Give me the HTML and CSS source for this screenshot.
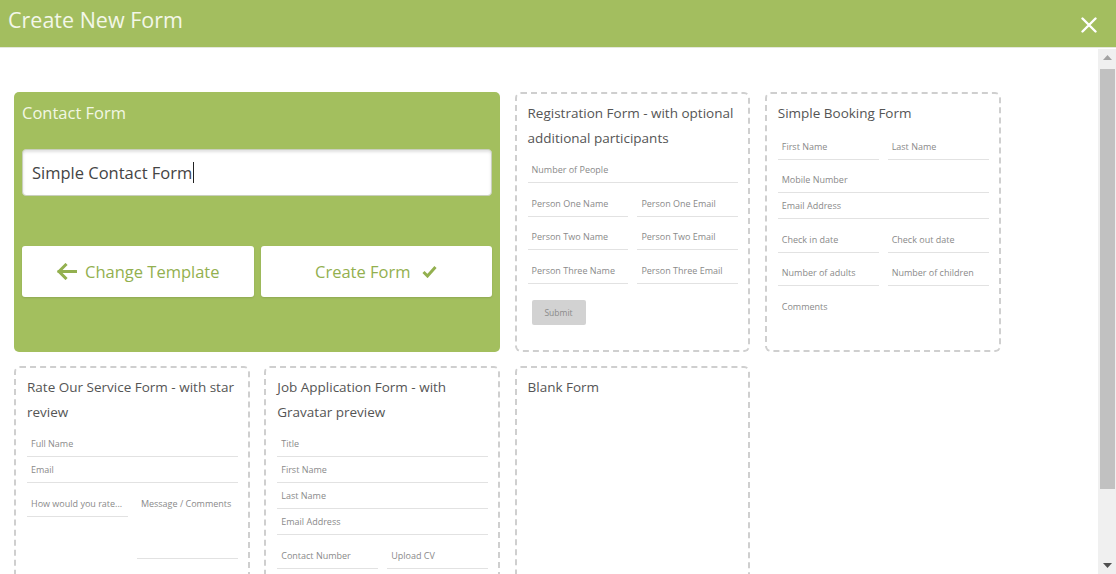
FILE: index.html
```html
<!DOCTYPE html>
<html>
<head>
<meta charset="utf-8">
<title>Create New Form</title>
<link rel="stylesheet" href="styles.css">
</head>
<body>
<div class="modal">
  <header class="modal-header">
    <h1 class="modal-title">Create New Form</h1>
    <button class="close-btn" aria-label="Close">
      <svg width="16" height="16" viewBox="0 0 16 16"><path d="M1.5 1.5 L14.5 14.5 M14.5 1.5 L1.5 14.5" stroke="#ffffff" stroke-width="2.4" stroke-linecap="round" fill="none"/></svg>
    </button>
  </header>
  <div class="modal-body">
    <div class="content">
      <div class="grid">
        <div class="card card-active">
          <div class="active-title">Contact Form</div>
          <div class="name-input">Simple Contact Form<span class="caret"></span></div>
          <div class="actions">
            <button class="action-btn">
              <svg width="21" height="17" viewBox="0 0 21 17"><path d="M19.5 8.5 H3 M9.5 2 L3 8.5 L9.5 15" stroke="#93b04f" stroke-width="3" fill="none" stroke-linecap="square"/></svg>
              <span>Change Template</span>
            </button>
            <button class="action-btn">
              <span>Create Form</span>
              <svg width="15" height="13" viewBox="0 0 15 13"><path d="M1.5 7 L5.5 11 L13.5 2" stroke="#93b04f" stroke-width="3" fill="none"/></svg>
            </button>
          </div>
        </div>

        <div class="card tpl">
          <div class="tpl-title">Registration Form - with optional additional participants</div>
          <div class="field">Number of People</div>
          <div class="field-row"><div class="field">Person One Name</div><div class="field">Person One Email</div></div>
          <div class="field-row"><div class="field">Person Two Name</div><div class="field">Person Two Email</div></div>
          <div class="field-row"><div class="field">Person Three Name</div><div class="field">Person Three Email</div></div>
          <div class="submit">Submit</div>
        </div>

        <div class="card tpl">
          <div class="tpl-title">Simple Booking Form</div>
          <div class="field-row"><div class="field">First Name</div><div class="field">Last Name</div></div>
          <div class="field">Mobile Number</div>
          <div class="field">Email Address</div>
          <div class="field-row"><div class="field">Check in date</div><div class="field">Check out date</div></div>
          <div class="field-row"><div class="field">Number of adults</div><div class="field">Number of children</div></div>
          <div class="field-row"><div class="field field-plain">Comments</div></div>
        </div>

        <div class="card tpl">
          <div class="tpl-title">Rate Our Service Form - with star review</div>
          <div class="field">Full Name</div>
          <div class="field">Email</div>
          <div class="field-row row-top"><div class="field field-ellipsis">How would you rate...</div><div class="field field-area">Message / Comments</div></div>
        </div>

        <div class="card tpl">
          <div class="tpl-title">Job Application Form - with Gravatar preview</div>
          <div class="field">Title</div>
          <div class="field">First Name</div>
          <div class="field">Last Name</div>
          <div class="field">Email Address</div>
          <div class="field-row"><div class="field">Contact Number</div><div class="field">Upload CV</div></div>
        </div>

        <div class="card tpl">
          <div class="tpl-title">Blank Form</div>
        </div>
      </div>
    </div>
    <div class="scrollbar">
      <div class="sb-arrow"><svg width="9" height="5" viewBox="0 0 9 5"><path d="M0 5 L4.5 0 L9 5 Z" fill="#a3a3a3"/></svg></div>
      <div class="sb-thumb"></div>
      <div class="sb-track"></div>
      <div class="sb-arrow"><svg width="9" height="5" viewBox="0 0 9 5"><path d="M0 0 L4.5 5 L9 0 Z" fill="#505050"/></svg></div>
    </div>
  </div>
</div>
</body>
</html>
```
FILE: styles.css
```css
* { box-sizing: border-box; }
html, body { margin: 0; padding: 0; }
body {
  font-family: "Open Sans", "Noto Sans", "Liberation Sans", sans-serif;
  background: #ffffff;
  width: 1116px;
  height: 574px;
  overflow: hidden;
}
.modal {
  display: flex;
  flex-direction: column;
  height: 574px;
}
.modal-header {
  height: 48px;
  flex: 0 0 48px;
  background: #a3be5f;
  border-bottom: 1px solid #e4e8dc;
  display: flex;
  align-items: center;
  justify-content: space-between;
  padding: 0 19px 0 8px;
}
.modal-title {
  margin: 0;
  font-weight: 400;
  font-size: 21.5px;
  color: #f3f7e9;
  line-height: 26px;
  margin-top: -7px;
}
.close-btn {
  border: 0;
  background: transparent;
  padding: 0;
  width: 16px;
  height: 16px;
  display: flex;
  margin-top: 2px;
}
.modal-body {
  flex: 1;
  display: flex;
  min-height: 0;
}
.content {
  flex: 1;
  overflow: hidden;
  padding: 44px 0 0 14px;
}
.grid {
  display: grid;
  grid-template-columns: repeat(4, 235.75px);
  grid-auto-rows: 260px;
  column-gap: 14.5px;
  row-gap: 14px;
}
.card { border-radius: 5px; }
.card-active {
  grid-column: span 2;
  background: #a3bf5e;
  padding: 8px;
}
.active-title {
  color: #f2f7e4;
  font-size: 16.5px;
  line-height: 26px;
  height: 26px;
}
.name-input {
  margin-top: 23px;
  height: 47px;
  background: #ffffff;
  border: 1px solid #c9cfbd;
  border-radius: 4px;
  box-shadow: inset 0 2px 3px rgba(0,0,0,0.12);
  padding: 0 9px;
  display: flex;
  align-items: center;
  font-size: 16.5px;
  color: #444;
}
.caret {
  display: inline-block;
  width: 1px;
  height: 21px;
  background: #222;
  margin-left: 1px;
}
.actions {
  margin-top: 50px;
  display: flex;
  gap: 7px;
}
.action-btn {
  flex: 1;
  height: 51px;
  background: #ffffff;
  border: 0;
  border-radius: 3px;
  box-shadow: 0 1px 2px rgba(0,0,0,0.12);
  display: flex;
  align-items: center;
  justify-content: center;
  gap: 8px;
  font-family: inherit;
  font-size: 16.5px;
  color: #93b04f;
  padding: 0;
}
.action-btn:last-child { gap: 12px; }
.tpl {
  border: 2px dashed #cfcfcf;
  border-radius: 6px;
  padding: 7px 10px 0 11px;
  overflow: hidden;
}
.tpl-title {
  font-size: 13.5px;
  line-height: 25px;
  color: #555;
  margin-bottom: 6px;
}
.field {
  font-size: 9px;
  color: #8a8a8a;
  line-height: 25px;
  height: 26px;
  padding-left: 4px;
  border-bottom: 1px solid #e2e2e2;
  white-space: nowrap;
}
.field-row {
  display: flex;
  gap: 9px;
  margin: 7.5px 0;
}
.field-row .field { flex: 1; min-width: 0; }
.field-row.row-top { align-items: flex-start; }
.field-plain { border-bottom: 0; flex: 0 0 100%; }
.field-ellipsis { overflow: hidden; text-overflow: ellipsis; }
.field-area { height: 68px; }
.submit {
  width: 54px;
  height: 25px;
  margin: 16px 0 0 4px;
  background: #d2d2d2;
  border-radius: 2px;
  font-size: 8.5px;
  color: #8a8a8a;
  display: flex;
  align-items: center;
  justify-content: center;
}
.scrollbar {
  width: 18px;
  flex: 0 0 18px;
  background: #f0f0f0;
  display: flex;
  flex-direction: column;
  align-items: center;
  margin-top: 1px;
  padding: 0 1px 0 1px;
}
.sb-arrow {
  height: 17px;
  width: 100%;
  display: flex;
  align-items: center;
  justify-content: center;
}
.sb-thumb {
  width: 15px;
  height: 420px;
  background: #c1c1c1;
  margin-top: 3px;
}
.sb-track { flex: 1; }
```
